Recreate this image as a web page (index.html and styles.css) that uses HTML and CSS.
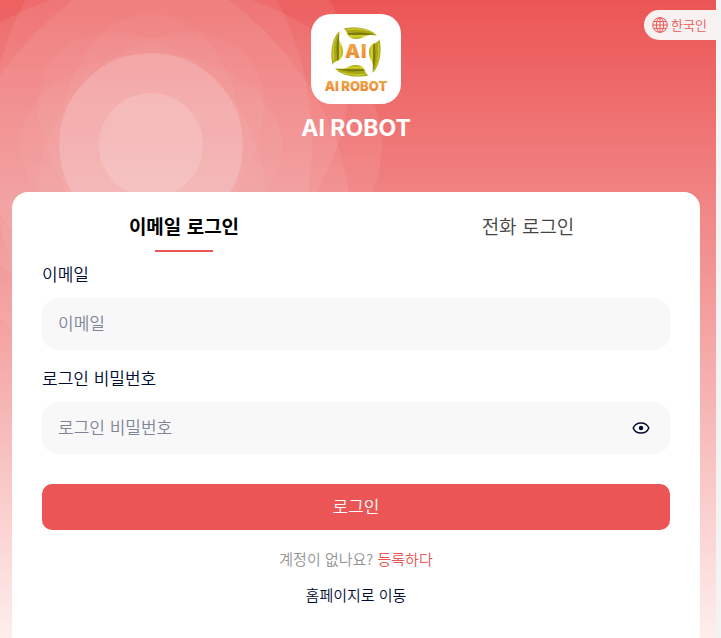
FILE: index.html
```html
<!DOCTYPE html>
<html lang="ko">
<head>
    <meta charset="UTF-8">
    <meta name="viewport" content="width=device-width, initial-scale=1.0">
    <title>AI ROBOT</title>
    <link rel="stylesheet" href="styles.css">
</head>
<body>
    <div class="page">
        <svg class="rings" width="400" height="400" viewBox="-200 -200 400 400" aria-hidden="true">
            <g class="ring-outer">
                <ellipse rx="231" ry="161"/>
                <ellipse rx="231" ry="161" transform="rotate(45)"/>
                <ellipse rx="231" ry="161" transform="rotate(90)"/>
                <ellipse rx="231" ry="161" transform="rotate(135)"/>
            </g>
            <g class="ring-inner">
                <ellipse rx="131" ry="91"/>
                <ellipse rx="131" ry="91" transform="rotate(45)"/>
                <ellipse rx="131" ry="91" transform="rotate(90)"/>
                <ellipse rx="131" ry="91" transform="rotate(135)"/>
            </g>
            <circle class="disc" r="92"/>
            <circle class="disc-center" r="52"/>
        </svg>

        <button class="lang" type="button">
            <svg width="16" height="16" viewBox="0 0 16 16" fill="none" stroke="currentColor" aria-hidden="true">
                <circle cx="8" cy="8" r="7.3"/>
                <ellipse cx="8" cy="8" rx="3.6" ry="7.3"/>
                <path d="M8 .7v14.6M.7 8h14.6M2 4.6h12M2 11.4h12"/>
            </svg>
            <span>한국인</span>
        </button>

        <header class="brand">
            <svg class="logo" width="90" height="90" viewBox="0 0 90 90" role="img" aria-label="AI ROBOT">
                <defs>
                    <linearGradient id="leafFill" x1="0" y1="0" x2="0" y2="1">
                        <stop offset="0" stop-color="#a3a013"/>
                        <stop offset=".5" stop-color="#aeab12"/>
                        <stop offset=".75" stop-color="#dcd92c"/>
                        <stop offset="1" stop-color="#a5a214"/>
                    </linearGradient>
                    <linearGradient id="gold" x1="0" y1="0" x2="0" y2="1">
                        <stop offset="0" stop-color="#eeb04c"/>
                        <stop offset="1" stop-color="#ee7f30"/>
                    </linearGradient>
                    <g id="leaf">
                        <path d="M32.500 14.500C43 12 59 13.500 66 21.500C60 20.500 57 21 53 23C47 26 40 25.500 37 21.500C35.500 19.500 36.500 17 32.500 14.500Z" fill="url(#leafFill)"/>
                        <path d="M37 19C45 19 52 17 66 21.500C56 20.500 48 21.500 37.500 21Z" fill="#5f5d0c" opacity=".65"/>
                        <path d="M35 15C45 13.500 56 14.500 62 19C54 16 45 15.500 36.500 16.500Z" fill="#d0cd38" opacity=".8"/>
                    </g>
                </defs>
                <use href="#leaf"/>
                <use href="#leaf" transform="rotate(90 45 38)"/>
                <use href="#leaf" transform="rotate(180 45 38)"/>
                <use href="#leaf" transform="rotate(270 45 38)"/>
                <text class="logo-ai" x="34" y="44">A</text>
                <text class="logo-ai" x="50" y="44">I</text>
                <text class="logo-name" x="45" y="77">AI ROBOT</text>
            </svg>
            <h1 class="title">AI ROBOT</h1>
        </header>

        <main class="card">
            <div class="tabs" role="tablist">
                <button class="tab active" type="button" role="tab" aria-selected="true">이메일 로그인</button>
                <button class="tab" type="button" role="tab" aria-selected="false">전화 로그인</button>
            </div>
            <form class="form">
                <div class="field">
                    <label for="email">이메일</label>
                    <div class="box">
                        <input id="email" type="text" placeholder="이메일">
                    </div>
                </div>
                <div class="field">
                    <label for="password">로그인 비밀번호</label>
                    <div class="box">
                        <input id="password" type="password" placeholder="로그인 비밀번호">
                        <button class="eye" type="button" aria-label="비밀번호 표시">
                            <svg width="18" height="18" viewBox="0 0 18 18" fill="none" aria-hidden="true">
                                <path d="M1.200 9C2.600 5.500 5.500 3.900 9 3.900S15.400 5.500 16.800 9C15.400 12.500 12.500 14.100 9 14.100S2.600 12.500 1.200 9Z" stroke="currentColor" stroke-width="1.500"/>
                                <circle cx="9" cy="9" r="2.200" fill="currentColor"/>
                            </svg>
                        </button>
                    </div>
                </div>
                <button class="submit" type="submit">로그인</button>
            </form>
            <p class="register">계정이 없나요? <a href="#">등록하다</a></p>
            <p class="home"><a href="#">홈페이지로 이동</a></p>
        </main>
    </div>
<script>
    let tabs = document.querySelectorAll(".tab");
    tabs.forEach(function(tab){
        tab.onclick = function(){
            tabs.forEach(function(t){
                t.classList.toggle("active", t === tab);
                t.setAttribute("aria-selected", t === tab);
            });
        }
    });

    let password = document.querySelector("#password");
    document.querySelector(".eye").onclick = function(){
        password.type = password.type === "password" ? "text" : "password";
    }
</script>
</body>
</html>
```
FILE: styles.css
```css
*{
    margin: 0;
    padding: 0;
    box-sizing: border-box;
}
body{
    background-color: #f3f3f3;
    padding-right: 5px;
    font-family: "Noto Sans CJK KR", sans-serif;
    font-weight: 350;
    color: #000c34;
}
button,input{
    border: none;
    background: none;
    font-family: inherit;
    font-weight: inherit;
    color: inherit;
}
button{
    cursor: pointer;
}
a{
    color: inherit;
    text-decoration: none;
}
.page{
    position: relative;
    display: flex;
    flex-direction: column;
    min-height: 100vh;
    padding: 14px 16px 0 12px;
    background: linear-gradient(#ec5555, #f4a0a0 50%, #feeeee);
    overflow: hidden;
}
/* background pattern */
.rings{
    position: absolute;
    left: -49px;
    top: -55px;
    overflow: visible;
    fill: #fff;
}
.ring-outer{
    fill-opacity: 0.07;
}
.ring-inner{
    fill-opacity: 0.04;
}
.disc{
    fill-opacity: 0.15;
}
.disc-center{
    fill-opacity: 0.15;
}
.lang{
    position: absolute;
    top: 10px;
    right: 0;
    display: flex;
    align-items: center;
    gap: 3px;
    height: 30px;
    padding: 0 9px 0 8px;
    border-radius: 15px 0 0 15px;
    background-color: #f8f1f1;
    color: #ec5555;
    font-size: 13px;
}
.lang span{
    padding-bottom: 2px;
}
.brand{
    position: relative;
    display: flex;
    flex-direction: column;
    align-items: center;
}
.logo{
    border-radius: 20px;
    background-color: #fff;
}
.logo text{
    font-family: Inter, sans-serif;
    font-weight: 900;
    fill: url(#gold);
}
.logo-ai{
    font-size: 19px;
}
.logo-name{
    font-size: 13px;
    text-anchor: middle;
}
.title{
    margin-top: 8px;
    line-height: 32px;
    font-family: Inter, sans-serif;
    font-size: 23px;
    font-weight: 700;
    color: #fff;
}
.card{
    position: relative;
    flex: 1;
    margin-top: 48px;
    padding-bottom: 30px;
    border-radius: 16px 16px 0 0;
    background-color: #fff;
}
.tabs{
    display: flex;
}
.tab{
    position: relative;
    flex: 1;
    height: 60px;
    padding-top: 6px;
    font-size: 19px;
    color: #444;
}
.tab.active{
    font-weight: 700;
    color: #000;
}
.tab.active::after{
    content: "";
    position: absolute;
    left: 50%;
    bottom: 0;
    width: 58px;
    height: 2px;
    background-color: #ec5555;
    transform: translateX(-50%);
}
.form{
    display: flex;
    flex-direction: column;
    gap: 16px;
    padding: 10px 30px 0;
}
.field{
    display: flex;
    flex-direction: column;
    gap: 12px;
    line-height: 24px;
    font-size: 17px;
}
.box{
    display: flex;
    align-items: center;
    height: 52px;
    padding: 0 20px 0 16px;
    border-radius: 16px;
    background-color: #f8f8f8;
}
.box input{
    flex: 1;
    min-width: 0;
    height: 100%;
    padding-bottom: 4px;
    font-size: 17px;
    outline: none;
}
.box input::placeholder{
    color: #7f8598;
}
.eye{
    display: flex;
}
.submit{
    height: 46px;
    margin-top: 14px;
    padding-bottom: 4px;
    border-radius: 10px;
    background-color: #ec5555;
    font-size: 17px;
    color: #fff;
}
.register,.home{
    line-height: 20px;
    font-size: 15px;
    text-align: center;
}
.register{
    margin-top: 19px;
    color: #929292;
}
.register a{
    color: #ec5555;
}
.home{
    margin-top: 16px;
}
```
